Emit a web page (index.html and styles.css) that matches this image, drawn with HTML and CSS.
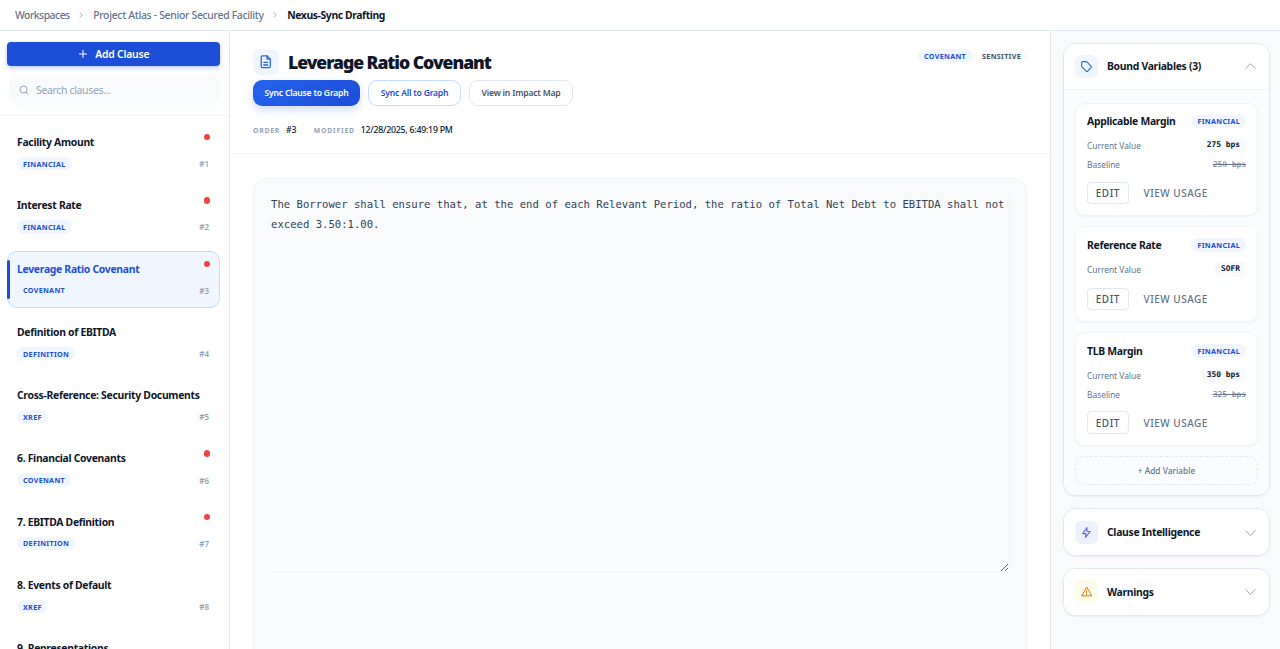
FILE: index.html
```html
<!DOCTYPE html>
<html lang="en">
<head>
<meta charset="utf-8">
<title>Nexus-Sync Drafting</title>
<link rel="stylesheet" href="styles.css">
</head>
<body>
<header class="topbar">
  <span class="crumb">Workspaces</span>
  <svg class="crumb-sep" viewBox="0 0 24 24"><path d="M9 6l6 6-6 6"/></svg>
  <span class="crumb">Project Atlas - Senior Secured Facility</span>
  <svg class="crumb-sep" viewBox="0 0 24 24"><path d="M9 6l6 6-6 6"/></svg>
  <span class="crumb-current">Nexus-Sync Drafting</span>
</header>
<div class="layout">
  <aside class="sidebar">
    <div class="side-top">
      <button class="add-clause"><svg viewBox="0 0 24 24"><path d="M12 4v16M4 12h16"/></svg>Add Clause</button>
      <div class="search"><svg viewBox="0 0 24 24"><circle cx="11" cy="11" r="7"/><path d="M20 20l-4-4"/></svg><span>Search clauses...</span></div>
    </div>
    <div class="clause-list">
      <div class="clause"><div class="clause-head"><span class="clause-title">Facility Amount</span><i class="dot"></i></div><div class="clause-foot"><span class="pill">FINANCIAL</span><span class="num">#1</span></div></div>
      <div class="clause"><div class="clause-head"><span class="clause-title">Interest Rate</span><i class="dot"></i></div><div class="clause-foot"><span class="pill">FINANCIAL</span><span class="num">#2</span></div></div>
      <div class="clause active"><div class="clause-head"><span class="clause-title">Leverage Ratio Covenant</span><i class="dot"></i></div><div class="clause-foot"><span class="pill">COVENANT</span><span class="num">#3</span></div></div>
      <div class="clause"><div class="clause-head"><span class="clause-title">Definition of EBITDA</span></div><div class="clause-foot"><span class="pill">DEFINITION</span><span class="num">#4</span></div></div>
      <div class="clause"><div class="clause-head"><span class="clause-title">Cross-Reference: Security Documents</span></div><div class="clause-foot"><span class="pill">XREF</span><span class="num">#5</span></div></div>
      <div class="clause"><div class="clause-head"><span class="clause-title">6. Financial Covenants</span><i class="dot"></i></div><div class="clause-foot"><span class="pill">COVENANT</span><span class="num">#6</span></div></div>
      <div class="clause"><div class="clause-head"><span class="clause-title">7. EBITDA Definition</span><i class="dot"></i></div><div class="clause-foot"><span class="pill">DEFINITION</span><span class="num">#7</span></div></div>
      <div class="clause"><div class="clause-head"><span class="clause-title">8. Events of Default</span></div><div class="clause-foot"><span class="pill">XREF</span><span class="num">#8</span></div></div>
      <div class="clause"><div class="clause-head"><span class="clause-title">9. Representations</span></div></div>
    </div>
  </aside>
  <main class="main">
    <section class="doc-head">
      <div class="doc-title-row">
        <div class="doc-title-left">
          <span class="icon-box doc-icon"><svg viewBox="0 0 24 24"><path d="M14 3H7a2 2 0 0 0-2 2v14a2 2 0 0 0 2 2h10a2 2 0 0 0 2-2V8z"/><path d="M14 3v5h5M9 13h6M9 17h6"/></svg></span>
          <h1>Leverage Ratio Covenant</h1>
        </div>
        <div class="doc-tags"><span class="pill">COVENANT</span><span class="pill grey">SENSITIVE</span></div>
      </div>
      <div class="doc-actions">
        <button class="btn primary">Sync Clause to Graph</button>
        <button class="btn outline-blue">Sync All to Graph</button>
        <button class="btn outline">View in Impact Map</button>
      </div>
      <div class="doc-meta">
        <span class="meta-label">ORDER</span><span class="meta-value order">#3</span>
        <span class="meta-label">MODIFIED</span><span class="meta-value">12/28/2025, 6:49:19 PM</span>
      </div>
    </section>
    <section class="doc-body">
      <div class="editor-card">
        <div class="editor">The Borrower shall ensure that, at the end of each Relevant Period, the ratio of Total Net Debt to EBITDA shall not exceed 3.50:1.00.</div>
      </div>
    </section>
  </main>
  <aside class="panel">
    <div class="acc">
      <div class="acc-head">
        <span class="icon-box"><svg viewBox="0 0 24 24"><path d="M3 5a2 2 0 0 1 2-2h6.2a2 2 0 0 1 1.4.6l7.8 7.8a2 2 0 0 1 0 2.8l-6.2 6.2a2 2 0 0 1-2.8 0l-7.8-7.8a2 2 0 0 1-.6-1.4z"/></svg></span>
        <span class="acc-title">Bound Variables (3)</span>
        <svg class="chev" viewBox="0 0 24 24"><path d="M5 15l7-7 7 7"/></svg>
      </div>
      <div class="acc-body">
        <div class="var">
          <div class="var-head"><span class="var-name">Applicable Margin</span><span class="pill">FINANCIAL</span></div>
          <div class="var-row"><span class="var-label">Current Value</span><span class="var-val">275 bps</span></div>
          <div class="var-row base"><span class="var-label">Baseline</span><span class="var-old">250 bps</span></div>
          <div class="var-actions"><button class="edit">EDIT</button><button class="usage">VIEW USAGE</button></div>
        </div>
        <div class="var">
          <div class="var-head"><span class="var-name">Reference Rate</span><span class="pill">FINANCIAL</span></div>
          <div class="var-row"><span class="var-label">Current Value</span><span class="var-val">SOFR</span></div>
          <div class="var-actions"><button class="edit">EDIT</button><button class="usage">VIEW USAGE</button></div>
        </div>
        <div class="var">
          <div class="var-head"><span class="var-name">TLB Margin</span><span class="pill">FINANCIAL</span></div>
          <div class="var-row"><span class="var-label">Current Value</span><span class="var-val">350 bps</span></div>
          <div class="var-row base"><span class="var-label">Baseline</span><span class="var-old">325 bps</span></div>
          <div class="var-actions"><button class="edit">EDIT</button><button class="usage">VIEW USAGE</button></div>
        </div>
        <div class="add-var">+ Add Variable</div>
      </div>
    </div>
    <div class="acc closed">
      <div class="acc-head">
        <span class="icon-box violet"><svg viewBox="0 0 24 24"><path d="M13 3L5 14h6l-1 7 9-11h-6z"/></svg></span>
        <span class="acc-title">Clause Intelligence</span>
        <svg class="chev" viewBox="0 0 24 24"><path d="M5 9l7 7 7-7"/></svg>
      </div>
    </div>
    <div class="acc closed">
      <div class="acc-head">
        <span class="icon-box amber"><svg viewBox="0 0 24 24"><path d="M12 4.5L3 20h18z"/><path d="M12 10.5v4M12 17.2v.3"/></svg></span>
        <span class="acc-title">Warnings</span>
        <svg class="chev" viewBox="0 0 24 24"><path d="M5 9l7 7 7-7"/></svg>
      </div>
    </div>
  </aside>
</div>
</body>
</html>
```
FILE: styles.css
```css
* { box-sizing: border-box; }
html, body { margin: 0; height: 100%; overflow: hidden; }
body { font-family: "Noto Sans", "Open Sans", sans-serif; color: #0f172a; background: #fff; display: flex; flex-direction: column; height: 649px; }
button { font-family: inherit; cursor: pointer; }

.topbar { height: 31px; flex: none; display: flex; align-items: center; padding: 0 15px 1px; border-bottom: 1px solid #e2e8f0; font-size: 10.4px; letter-spacing: -.3px; }
.crumb { color: #64748b; font-weight: 500; }
.crumb:first-child { letter-spacing: -.5px; }
.crumb-current { color: #0f172a; font-weight: 700; letter-spacing: -.4px; }
.crumb-sep { width: 10px; height: 10px; margin: 0 7px 0 6.5px; fill: none; stroke: #94a3b8; stroke-width: 2; }

.layout { flex: 1; display: flex; min-height: 0; }

.sidebar { width: 230px; flex: none; border-right: 1px solid #e2e8f0; display: flex; flex-direction: column; overflow: hidden; }
.side-top { padding: 11px 9px 10px 7px; border-bottom: 1px solid #f1f5f9; }
.add-clause { width: 212.5px; height: 24px; border: 0; border-radius: 4px; background: #1d4ed8; color: #fff; font-size: 10.4px; font-weight: 600; letter-spacing: -.2px; display: flex; align-items: center; justify-content: center; gap: 6px; box-shadow: 0 2px 5px rgba(29, 78, 216, .3); }
.add-clause svg { width: 12px; height: 12px; fill: none; stroke: #fff; stroke-width: 2; }
.search { margin: 9px 0 0 2px; height: 30px; border-radius: 10px; background: #f8fafc; display: flex; align-items: center; gap: 6px; padding: 0 9px; font-size: 10.4px; letter-spacing: -.3px; color: #94a3b8; }
.search svg { width: 12px; height: 12px; fill: none; stroke: #94a3b8; stroke-width: 2; }

.clause-list { padding: 8.5px 9px 0 7px; display: flex; flex-direction: column; gap: 6px; }
.clause { height: 57.3px; flex: none; padding: 8.5px 10px 0 9px; border: 1px solid transparent; border-radius: 10px; position: relative; }
.clause-head { display: flex; justify-content: space-between; align-items: flex-start; height: 23px; }
.clause-title { font-size: 10.4px; font-weight: 700; letter-spacing: -.3px; line-height: 16px; color: #0f172a; }
.dot { width: 6.4px; height: 6.4px; border-radius: 50%; background: #ef4444; margin: 0 -1px 0 0; }
.clause-foot { display: flex; justify-content: space-between; align-items: center; }
.pill { display: inline-flex; align-items: center; height: 13.4px; padding: 0 6px; border-radius: 7px; background: #eff6ff; color: #1d4ed8; font-size: 7.2px; font-weight: 700; letter-spacing: .3px; white-space: nowrap; }
.pill.grey { background: #f8fafc; color: #475569; }
.num { font-size: 8px; font-weight: 600; color: #94a3b8; }
.clause.active { background: #eff6ff; border-color: #bfdbfe; }
.clause.active .clause-title { color: #1d4ed8; }
.clause.active::before { content: ""; position: absolute; left: -1px; top: 8px; bottom: 8px; width: 3.3px; background: #1d4ed8; border-radius: 2px; }

.main { flex: 1; min-width: 0; border-right: 1px solid #e2e8f0; display: flex; flex-direction: column; overflow: hidden; }
.doc-head { padding: 18px 23px 16px; border-bottom: 1px solid #f1f5f9; flex: none; }
.doc-title-row { display: flex; justify-content: space-between; align-items: flex-start; }
.doc-title-left { display: flex; align-items: center; gap: 9px; }
.icon-box { width: 23px; height: 23px; flex: none; border-radius: 6px; background: #eff6ff; display: flex; align-items: center; justify-content: center; }
.icon-box svg { width: 13px; height: 13px; fill: none; stroke: #2563eb; stroke-width: 2; stroke-linecap: round; stroke-linejoin: round; }
.doc-icon { width: 26px; height: 26px; border-radius: 7px; }
.doc-icon svg { width: 15.5px; height: 15.5px; }
h1 { margin: 0; padding-top: 1px; font-size: 17.6px; font-weight: 900; letter-spacing: -1.05px; line-height: 25px; color: #0f172a; }
.doc-tags { display: flex; gap: 4px; }
.doc-actions { display: flex; gap: 8px; margin-top: 5px; }
.btn { height: 26.4px; border-radius: 9px; font-size: 8.6px; font-weight: 600; letter-spacing: -.2px; padding: 0; }
.btn.primary { width: 107px; border: 0; color: #fff; background: linear-gradient(135deg, #2563eb, #1d4ed8); box-shadow: 0 4px 8px rgba(37, 99, 235, .22); }
.btn.outline-blue { width: 93px; border: 1px solid #bfdbfe; background: #fff; color: #1d4ed8; }
.btn.outline { width: 104px; border: 1px solid #e2e8f0; background: #fff; color: #475569; }
.doc-meta { display: flex; align-items: center; margin-top: 17px; height: 14px; font-size: 8.8px; letter-spacing: -.25px; }
.meta-label { font-size: 6.8px; font-weight: 700; letter-spacing: .8px; color: #94a3b8; margin-right: 6px; }
.meta-value { color: #0f172a; font-weight: 500; }
.meta-value.order { margin-right: 17.5px; }

.doc-body { flex: 1; min-height: 0; padding: 24px 23px 0; overflow: hidden; background: #fff; }
.editor-card { height: 600px; background: #f8fafc; border: 1px solid #f1f5f9; border-radius: 12px; padding: 15px 16px 0 16px; }
.editor { width: 740px; height: 379px; padding: 0 1px; overflow: auto; resize: both; border-right: 1px solid #f1f5f9; border-bottom: 1px solid #f1f5f9; font-family: "DejaVu Sans Mono", monospace; font-size: 10.6px; line-height: 20px; color: #334155; }

.panel { width: 229px; flex: none; background: #f8fafc; padding: 11.7px 10px 0 12px; display: flex; flex-direction: column; gap: 12px; overflow: hidden; }
.acc { background: #fff; border: 1px solid #e2e8f0; border-radius: 12.8px; box-shadow: 0 1px 2px rgba(15, 23, 42, .05); overflow: hidden; flex: none; }
.acc-head { height: 45.6px; display: flex; align-items: center; padding: 0 10px 0 11px; gap: 9px; background: #fff; }
.acc-title { flex: 1; font-size: 10.4px; font-weight: 700; letter-spacing: -.3px; color: #0f172a; }
.chev { width: 17px; height: 17px; fill: none; stroke: #94a3b8; stroke-width: 1.4; }
.icon-box.violet { background: #eef2ff; }
.icon-box.violet svg { stroke: #6366f1; }
.icon-box.amber { background: #fffbeb; }
.icon-box.amber svg { stroke: #d97706; stroke-width: 1.8; }
.acc-body { padding: 12.4px 11px 10.5px; border-top: 1px solid #f1f5f9; background: #fbfcfe; display: flex; flex-direction: column; gap: 10px; }
.var { background: #fff; border: 1px solid #f1f5f9; border-radius: 9.6px; padding: 11px; box-shadow: 0 1px 2px rgba(15, 23, 42, .04); }
.var-head { display: flex; justify-content: space-between; align-items: center; height: 13.3px; }
.var-name { font-size: 10.4px; font-weight: 700; letter-spacing: -.3px; color: #0f172a; }
.var-row { display: flex; justify-content: space-between; align-items: center; margin-top: 10.4px; height: 14.6px; }
.var-row.base { margin-top: 5.7px; height: 12.4px; }
.var-label { font-size: 8.4px; color: #64748b; }
.var-val { font-family: "DejaVu Sans Mono", monospace; font-size: 7.9px; font-weight: 700; color: #0f172a; background: #f8fafc; padding: 0 6px; height: 14.6px; line-height: 14.6px; border-radius: 4px; white-space: pre; }
.var-old { font-family: "DejaVu Sans Mono", monospace; font-size: 7.9px; color: #64748b; text-decoration: line-through; }
.var-actions { display: flex; align-items: center; gap: 15px; margin-top: 11px; }
.edit { width: 41.6px; height: 22.4px; border: 1px solid #e2e8f0; border-radius: 4px; background: #fff; color: #475569; font-size: 10px; font-weight: 500; letter-spacing: .5px; padding: 0; }
.usage { border: 0; background: none; color: #64748b; font-size: 10px; font-weight: 500; letter-spacing: .5px; padding: 0; }
.add-var { height: 29px; border: 1px dashed #e2e8f0; border-radius: 9.6px; display: flex; align-items: center; justify-content: center; font-size: 8.4px; font-weight: 500; color: #64748b; }
```
